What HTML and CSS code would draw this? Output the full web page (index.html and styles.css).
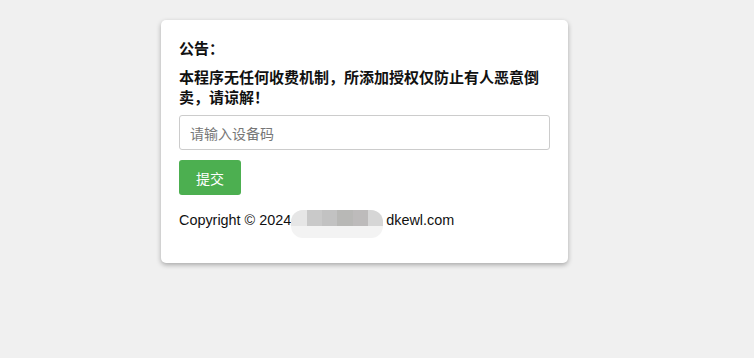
FILE: index.html
```html
<!DOCTYPE html>
<html lang="zh">
<head>
<meta charset="utf-8">
<title>公告</title>
<link rel="stylesheet" href="styles.css">
</head>
<body>
<div class="card">
  <div class="title">公告：</div>
  <div class="notice">本程序无任何收费机制，所添加授权仅防止有人恶意倒卖，请谅解！</div>
  <input class="field" type="text" placeholder="请输入设备码">
  <button class="submit" type="button">提交</button>
  <div class="copy">Copyright © 2024<span class="blur"><i class="b1"></i><i class="b2"></i><i class="b3"></i><i class="b4"></i><i class="b5"></i><i class="b6"></i></span>dkewl.com</div>
</div>
</body>
</html>
```
FILE: styles.css
```css
html, body {
  margin: 0;
  padding: 0;
  background: #f0f0f0;
  font-family: "Liberation Sans", Arial, "Noto Sans CJK SC", sans-serif;
}
body {
  padding-top: 20px;
  height: 338px;
}
.card {
  box-sizing: border-box;
  width: 407px;
  margin-left: 161px;
  background: #fff;
  border-radius: 5px;
  box-shadow: 0 2px 5px rgba(0, 0, 0, 0.3);
  padding: 18px 18px 33px 18px;
  display: flex;
  flex-direction: column;
  align-items: flex-start;
}
.title, .notice {
  font-family: "Noto Sans CJK SC", sans-serif;
  font-weight: bold;
  font-size: 15px;
  line-height: 20px;
  color: #111;
}
.notice {
  margin-top: 9px;
}
.field {
  box-sizing: border-box;
  width: 100%;
  height: 35px;
  margin: 8px 0 0 0;
  border: 1px solid #ccc;
  border-radius: 3px;
  padding: 0 10px;
  font-family: "Noto Sans CJK SC", sans-serif;
  font-size: 14px;
  outline: none;
}
.field::placeholder {
  color: #777;
}
.submit {
  margin-top: 10px;
  width: 62px;
  height: 35px;
  border: none;
  border-radius: 3px;
  background: #4caf50;
  color: #fff;
  font-family: "Noto Sans CJK SC", sans-serif;
  font-size: 14px;
  padding: 0;
}
.copy {
  margin-top: 15px;
  font-size: 14.4px;
  line-height: 20px;
  height: 20px;
  color: #111;
  display: flex;
  align-items: center;
}
.blur {
  display: inline-flex;
  width: 92px;
  height: 28px;
  margin: 8px 3px 0 0;
  border-radius: 12px;
  overflow: hidden;
  background: #f3f3f3;
  flex-shrink: 0;
}
.blur i {
  display: block;
  height: 16px;
  flex: 1;
}
.b1 { background: #e6e6e6; }
.b2 { background: #c9c9c9; }
.b3 { background: #c2c2c2; }
.b4 { background: #b8b8b6; }
.b5 { background: #bdbbbb; }
.b6 { background: #d6d6d6; }
```
